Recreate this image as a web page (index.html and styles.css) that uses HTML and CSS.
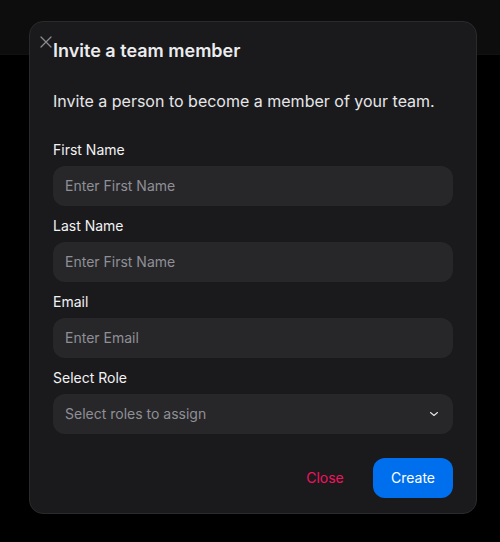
FILE: index.html
```html
<!DOCTYPE html>
<html>
<head>
<meta charset="utf-8">
<link rel="stylesheet" href="styles.css">
</head>
<body>
<div class="topbar"></div>
<div class="overlay">
  <div class="modal">
    <button class="close-x" aria-label="Close">
      <svg width="12" height="12" viewBox="0 0 12 12"><path d="M1 1L11 11M11 1L1 11" stroke="#8a8a8f" stroke-width="1.3" fill="none" stroke-linecap="round"/></svg>
    </button>
    <h2 class="title">Invite a team member</h2>
    <p class="desc">Invite a person to become a member of your team.</p>
    <div class="fields">
      <div class="field">
        <label class="label">First Name</label>
        <div class="input">Enter First Name</div>
      </div>
      <div class="field">
        <label class="label">Last Name</label>
        <div class="input">Enter First Name</div>
      </div>
      <div class="field">
        <label class="label">Email</label>
        <div class="input">Enter Email</div>
      </div>
      <div class="field">
        <label class="label">Select Role</label>
        <div class="input select">
          <span>Select roles to assign</span>
          <svg width="10" height="10" viewBox="0 0 10 10"><path d="M1.5 3.5L5 6.5L8.5 3.5" stroke="#e4e4e7" stroke-width="1.1" fill="none" stroke-linecap="round" stroke-linejoin="round"/></svg>
        </div>
      </div>
    </div>
    <div class="footer">
      <button class="btn btn-light">Close</button>
      <button class="btn btn-primary">Create</button>
    </div>
  </div>
</div>
</body>
</html>
```
FILE: styles.css
```css
* { box-sizing: border-box; }
html, body { margin: 0; padding: 0; }
body {
  width: 500px;
  height: 542px;
  background: #000;
  font-family: Inter, "Noto Sans", sans-serif;
  position: relative;
  overflow: hidden;
}
.topbar {
  height: 55px;
  background: #0d0d0d;
  border-bottom: 1px solid #111;
}
.overlay {
  position: absolute;
  inset: 0;
  padding: 21px 0 0 29px;
}
.modal {
  position: relative;
  width: 448px;
  height: 493px;
  background: #1a1a1c;
  border: 1px solid #2a2a2d;
  border-radius: 14px;
  padding: 15px 23px 15px 23px;
  display: flex;
  flex-direction: column;
}
.close-x {
  position: absolute;
  top: 13px;
  left: 9px;
  width: 14px;
  height: 14px;
  padding: 0;
  border: 0;
  background: none;
  display: flex;
  align-items: center;
  justify-content: center;
}
.title {
  margin: 0;
  font-size: 18px;
  line-height: 28px;
  font-weight: 600;
  color: #ececee;
}
.desc {
  margin: 24px 0 0 0;
  font-size: 16px;
  line-height: 24px;
  color: #e6e6e9;
}
.fields {
  margin-top: 27px;
  display: flex;
  flex-direction: column;
  gap: 10px;
}
.field {
  display: flex;
  flex-direction: column;
  gap: 6px;
}
.label {
  font-size: 14px;
  line-height: 20px;
  color: #f2f2f4;
}
.input {
  height: 40px;
  border-radius: 12px;
  background: #27272a;
  padding: 0 12px 1px 12px;
  display: flex;
  align-items: center;
  font-size: 14px;
  color: #8f8f96;
}
.select {
  justify-content: space-between;
  padding-right: 14px;
}
.footer {
  margin-top: 24px;
  display: flex;
  justify-content: flex-end;
  gap: 8px;
}
.btn {
  width: 80px;
  height: 40px;
  border: 0;
  border-radius: 12px;
  font-family: Inter, "Noto Sans", sans-serif;
  font-size: 14px;
  padding: 0 0 1px 0;
}
.btn-light {
  background: transparent;
  color: #f31260;
}
.btn-primary {
  background: #006fee;
  color: #fff;
}
```
